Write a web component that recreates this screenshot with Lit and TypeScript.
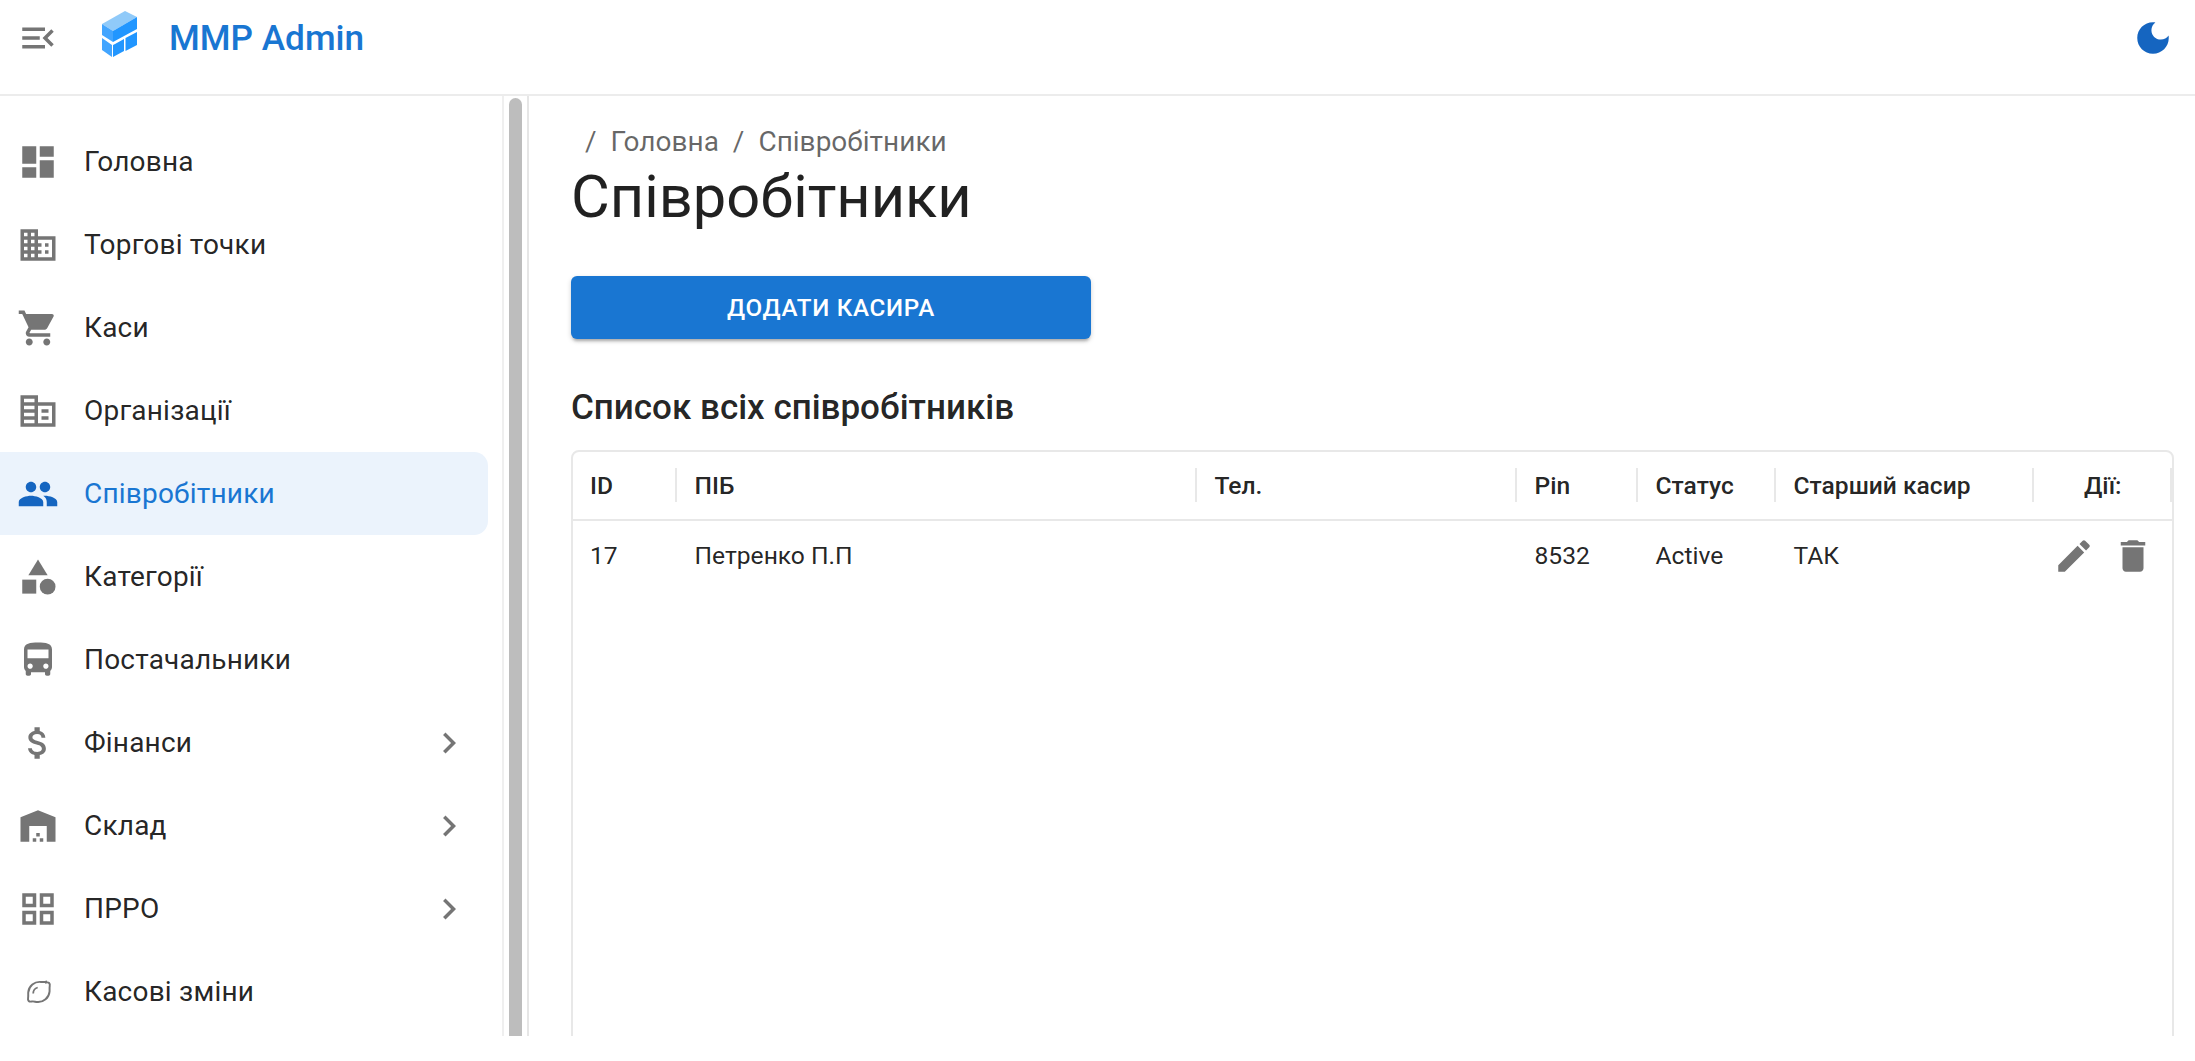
import { LitElement, html, css, svg } from "lit";
import { customElement } from "lit/decorators.js";

const P: Record<string, any> = {
  dashboard: svg`<path d="M3 13h8V3H3v10zm0 8h8v-6H3v6zm10 0h8V11h-8v10zm0-18v6h8V3h-8z"/>`,
  domain: svg`<path d="M12 7V3H2v18h20V7H12zM6 19H4v-2h2v2zm0-4H4v-2h2v2zm0-4H4V9h2v2zm0-4H4V5h2v2zm4 12H8v-2h2v2zm0-4H8v-2h2v2zm0-4H8V9h2v2zm0-4H8V5h2v2zm10 12h-8v-2h2v-2h-2v-2h2v-2h-2V9h8v10zm-2-8h-2v2h2v-2zm0 4h-2v2h2v-2z"/>`,
  cart: svg`<path d="M7 18c-1.1 0-1.99.9-1.99 2S5.9 22 7 22s2-.9 2-2-.9-2-2-2zM1 2v2h2l3.6 7.59-1.35 2.45c-.16.28-.25.61-.25.96 0 1.1.9 2 2 2h12v-2H7.42c-.14 0-.25-.11-.25-.25l.03-.12.9-1.63h7.45c.75 0 1.41-.41 1.75-1.03l3.58-6.49c.08-.14.12-.31.12-.48 0-.55-.45-1-1-1H5.21l-.94-2H1zm16 16c-1.1 0-1.99.9-1.99 2s.89 2 1.99 2 2-.9 2-2-.9-2-2-2z"/>`,
  org: svg`<path d="M12 7V3H2v18h20V7H12zM10 19H4v-2h6v2zm0-4H4v-2h6v2zm0-4H4V9h6v2zm0-4H4V5h6v2zm10 12h-8V9h8v10zm-2-8h-4v2h4v-2zm0 4h-4v2h4v-2z"/>`,
  people: svg`<path d="M16 11c1.66 0 2.99-1.34 2.99-3S17.66 5 16 5c-1.66 0-3 1.34-3 3s1.34 3 3 3zm-8 0c1.66 0 2.99-1.34 2.99-3S9.66 5 8 5C6.34 5 5 6.34 5 8s1.34 3 3 3zm0 2c-2.33 0-7 1.17-7 3.5V19h14v-2.5c0-2.33-4.67-3.5-7-3.5zm8 0c-.29 0-.62.02-.97.05 1.16.84 1.97 1.97 1.97 3.45V19h6v-2.5c0-2.33-4.67-3.5-7-3.5z"/>`,
  category: svg`<path d="M12 2l-5.5 9h11z"/><circle cx="17.5" cy="17.5" r="4.5"/><path d="M3 13.5h8v8H3z"/>`,
  bus: svg`<path d="M4 16c0 .88.39 1.67 1 2.22V20c0 .55.45 1 1 1h1c.55 0 1-.45 1-1v-1h8v1c0 .55.45 1 1 1h1c.55 0 1-.45 1-1v-1.78c.61-.55 1-1.34 1-2.22V6c0-3.5-3.58-4-8-4s-8 .5-8 4v10zm3.5 1c-.83 0-1.5-.67-1.5-1.5S6.67 14 7.5 14s1.5.67 1.5 1.5S8.33 17 7.5 17zm9 0c-.83 0-1.5-.67-1.5-1.5s.67-1.5 1.5-1.5 1.5.67 1.5 1.5-.67 1.5-1.5 1.5zm1.5-6H6V6h12v5z"/>`,
  money: svg`<path d="M11.8 10.9c-2.27-.59-3-1.2-3-2.15 0-1.09 1.01-1.85 2.7-1.85 1.78 0 2.44.85 2.5 2.1h2.21c-.07-1.72-1.12-3.3-3.21-3.81V3h-3v2.16c-1.94.42-3.5 1.68-3.5 3.61 0 2.31 1.91 3.46 4.7 4.13 2.5.6 3 1.48 3 2.41 0 .69-.49 1.79-2.7 1.79-2.06 0-2.87-.92-2.98-2.1h-2.2c.12 2.19 1.76 3.42 3.68 3.83V21h3v-2.15c1.95-.37 3.5-1.5 3.5-3.55 0-2.84-2.43-3.81-4.7-4.4z"/>`,
  warehouse: svg`<path d="M22 21V7L12 3 2 7v14h5v-9h10v9h5zm-11-2H9v2h2v-2zm2-3h-2v2h2v-2zm2 3h-2v2h2v-2z"/>`,
  grid: svg`<path d="M3 3v8h8V3H3zm6 6H5V5h4v4zm-6 4v8h8v-8H3zm6 6H5v-4h4v4zm4-16v8h8V3h-8zm6 6h-4V5h4v4zm-6 4v8h8v-8h-8zm6 6h-4v-4h4v4z"/>`,
  lemon: svg`<path fill="none" stroke="currentColor" stroke-width="1.3" d="M17.400 5.200c-1.100.3-2.300.2-3.500.1-4.300-.4-8 2.800-8.400 7-.1 1.300.1 2.300-.1 3.400-.2 1-.1 1.800.4 2.300.5.500 1.300.5 2.200.3 1.100-.2 2.200.3 3.500.4 4.200.3 7.800-2.800 8.200-7 .1-1.300-.1-2.400.1-3.500.2-.9.100-1.700-.4-2.200-.5-.5-1.200-.5-2-.3z"/><path fill="none" stroke="currentColor" stroke-width="1.200" d="M8.800 13c0-1.900 1.200-3.500 3-4"/>`,
  chevron: svg`<path d="M10 6L8.59 7.410 13.170 12l-4.580 4.590L10 18l6-6z"/>`,
  edit: svg`<path d="M3 17.250V21h3.750L17.810 9.940l-3.750-3.750L3 17.250zM20.710 7.040c.39-.39.39-1.020 0-1.410l-2.340-2.340c-.39-.39-1.020-.39-1.410 0l-1.830 1.830 3.750 3.750 1.830-1.830z"/>`,
  del: svg`<path d="M6 19c0 1.100.9 2 2 2h8c1.100 0 2-.9 2-2V7H6v12zM19 4h-3.500l-1-1h-5l-1 1H5v2h14V4z"/>`,
  moon: svg`<path d="M12 3c-4.970 0-9 4.030-9 9s4.030 9 9 9 9-4.030 9-9c0-.46-.04-.92-.1-1.360-.98 1.370-2.580 2.260-4.400 2.260-2.980 0-5.400-2.420-5.400-5.400 0-1.810.89-3.420 2.260-4.400-.44-.06-.9-.1-1.360-.1z"/>`,
  menu: svg`<path d="M3 18h13v-2H3v2zm0-5h10v-2H3v2zm0-7v2h13V6H3zm18 9.590L17.420 12 21 8.410 19.590 7l-5 5 5 5L21 15.590z"/>`,
};

const icon = (name: string, cls = "") =>
  html`<svg class="ic ${cls}" viewBox="0 0 24 24" fill="currentColor" aria-hidden="true">${P[name]}</svg>`;

const NAV = [
  { i: "dashboard", t: "Головна" },
  { i: "domain", t: "Торгові точки" },
  { i: "cart", t: "Каси" },
  { i: "org", t: "Організації" },
  { i: "people", t: "Співробітники", active: true },
  { i: "category", t: "Категорії" },
  { i: "bus", t: "Постачальники" },
  { i: "money", t: "Фінанси", more: true },
  { i: "warehouse", t: "Склад", more: true },
  { i: "grid", t: "ПРРО", more: true },
  { i: "lemon", t: "Касові зміни", small: true },
];

const COLS = ["ID", "ПІБ", "Тел.", "Pin", "Статус", "Старший касир"];
const ROW = ["17", "Петренко П.П", "", "8532", "Active", "ТАК"];

@customElement("app-root")
export class AppRoot extends LitElement {
  static styles = css`
    :host {
      display: block;
      height: 1036px;
      overflow: hidden;
      background: #fff;
      font-family: Roboto, "Noto Sans", sans-serif;
      color: rgba(0, 0, 0, 0.87);
      font-size: 28px;
    }
    .ic { width: 42px; height: 42px; flex: none; display: block; }
    .top {
      height: 94px;
      border-bottom: 2px solid #ececec;
      display: flex;
      align-items: center;
    }
    .burger { margin-left: 17px; color: #757575; margin-top: -18px; }
    .logo { width: 40px; height: 52px; flex: none; margin-left: 41px; margin-top: -26px; display: block; }
    .brand { margin-left: 29px; margin-top: -19px; font-size: 35.2px; font-weight: 500; color: #1976d2; }
    .moon { margin-left: auto; margin-right: 21px; margin-top: -18px; color: #1565c0; }
    .body { display: flex; height: 940px; }
    .side { width: 502px; flex: none; padding-top: 24px; box-sizing: border-box; overflow: hidden; }
    .item {
      height: 83px;
      width: 488px;
      display: flex;
      align-items: center;
      box-sizing: border-box;
      padding-left: 17px;
      border-radius: 0 14px 14px 0;
    }
    .item .label { margin-left: 25px; letter-spacing: 0.2px; }
    .item .ic { color: #757575; }
    .item .ic.small { width: 36px; height: 36px; margin: 0 3px; }
    .item.active { background: #ebf3fc; }
    .item.active .label { color: #1976d2; }
    .item.active .ic { color: #1565c0; }
    .item .more { margin-left: auto; margin-right: 18px; }
    .track {
      width: 27px;
      flex: none;
      box-sizing: border-box;
      border-left: 2px solid #efefef;
      border-right: 2px solid #e6e6e6;
      padding: 2px 5px 0;
    }
    .thumb { height: 1000px; background: #bdbdbd; border-radius: 7px; }
    .main { flex: 1; min-width: 0; padding: 31px 21px 0 42px; overflow: hidden; }
    .crumbs { display: flex; padding-left: 14px; gap: 14px; color: rgba(0, 0, 0, 0.6); line-height: 30px; }
    h1 { margin: 5px 0 0; font-size: 59.6px; font-weight: 400; line-height: 70px; }
    .add {
      display: block;
      margin: 44px 0 0;
      width: 520px;
      height: 63px;
      border: 0;
      border-radius: 6px;
      background: #1976d2;
      color: #fff;
      font: 500 24.2px Roboto, sans-serif;
      letter-spacing: 0.7px;
      box-shadow: 0 4px 3px -2px rgba(0, 0, 0, 0.22), 0 2px 5px rgba(0, 0, 0, 0.18);
    }
    h2 { margin: 49px 0 0; font-size: 35px; font-weight: 500; line-height: 40px; }
    .table {
      margin-top: 22px;
      height: 800px;
      border: 2px solid #e8e8e8;
      border-radius: 8px;
      box-sizing: border-box;
    }
    .row { display: grid; grid-template-columns: 103.5px 520px 320px 121px 138px 258px 1fr; align-items: center; }
    .head { height: 66px; border-bottom: 2px solid #e8e8e8; font-weight: 500; font-size: 24.6px; padding-bottom: 1px; }
    .cell { padding-left: 18px; position: relative; }
    .cell:first-child { padding-left: 17px; }
    .head .cell::after {
      content: "";
      position: absolute;
      right: 0;
      top: 50%;
      height: 34px;
      margin-top: -17px;
      width: 2px;
      background: #e8e8e8;
    }
    .body-row { height: 69px; font-size: 24.6px; }
    .actions { padding-left: 0; text-align: center; }
    .btns { display: flex; color: #757575; gap: 17px; padding-left: 19px; }
  `;

  render() {
    return html`
      <header class="top">
        ${icon("menu", "burger")}
        <svg class="logo" viewBox="100 8 40 52" aria-hidden="true">
          <polygon fill="#90caf9" points="102,24 125,11 137,17 113,31" />
          <polygon fill="#42a5ff" points="102,24 113,31 113,42 102,35" />
          <polygon fill="#2196ff" points="113,31 137,17 137,29 113,42" />
          <polygon fill="#42a5ff" points="102,38 112,45 112,57 102,50" />
          <polygon fill="#2196ff" points="115,44 124,39 124,51 113,57 113,45" />
          <polygon fill="#2196ff" points="125.500,38 137,32 137,45 125.500,51" />
        </svg>
        <span class="brand">MMP Admin</span>
        ${icon("moon", "moon")}
      </header>
      <div class="body">
        <nav class="side">
          ${NAV.map(
            (n) => html`<div class="item ${n.active ? "active" : ""}">
              ${icon(n.i, n.small ? "small" : "")}<span class="label">${n.t}</span>
              ${n.more ? icon("chevron", "more") : ""}
            </div>`
          )}
        </nav>
        <div class="track"><div class="thumb"></div></div>
        <main class="main">
          <div class="crumbs"><span>/</span><span>Головна</span><span>/</span><span>Співробітники</span></div>
          <h1>Співробітники</h1>
          <button class="add">ДОДАТИ КАСИРА</button>
          <h2>Список всіх співробітників</h2>
          <section class="table">
            <div class="row head">
              ${COLS.map((c) => html`<div class="cell">${c}</div>`)}
              <div class="cell actions">Дії:</div>
            </div>
            <div class="row body-row">
              ${ROW.map((c) => html`<div class="cell">${c}</div>`)}
              <div class="cell actions">
                <div class="btns">${icon("edit")}${icon("del")}</div>
              </div>
            </div>
          </section>
        </main>
      </div>
    `;
  }
}
